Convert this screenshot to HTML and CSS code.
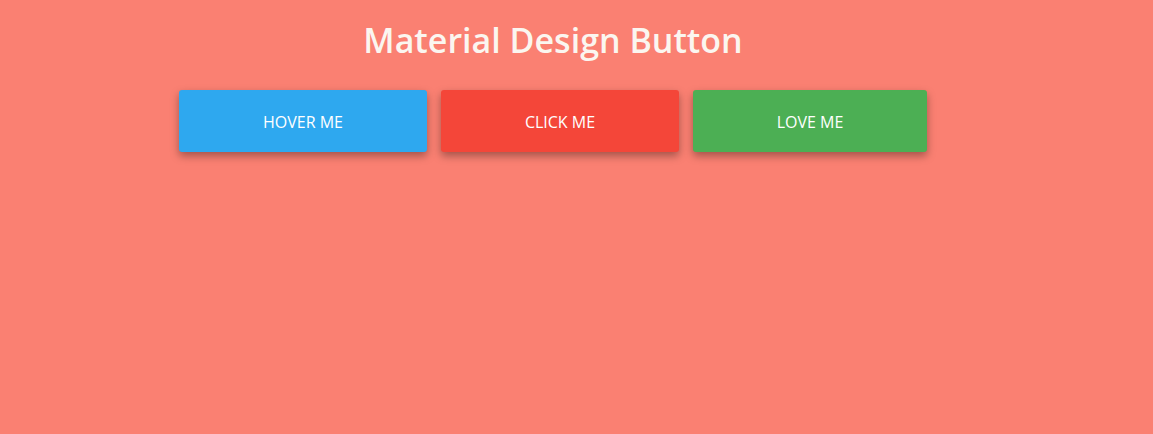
FILE: index.html
```html
<!DOCTYPE html>
<html>
<head>
<meta charset="utf-8">
<link rel="stylesheet" href="styles.css">
</head>
<body>
<div class="wrap">
  <h1 class="title">Material Design Button</h1>
  <div class="buttons">
    <button class="btn btn-blue">HOVER ME</button>
    <button class="btn btn-red">CLICK ME</button>
    <button class="btn btn-green">LOVE ME</button>
  </div>
</div>
</body>
</html>
```
FILE: styles.css
```css
html, body {
  margin: 0;
  padding: 0;
  background: #fa8072;
  height: 100%;
}
.wrap {
  width: 1106px;
  font-family: "Open Sans", sans-serif;
}
.title {
  margin: 0;
  padding-top: 15px;
  text-align: center;
  color: #fbf6f0;
  font-size: 34px;
  font-weight: 600;
  line-height: 50px;
}
.buttons {
  display: flex;
  justify-content: center;
  gap: 14px;
  margin-top: 25px;
}
.btn {
  height: 62px;
  border: none;
  border-radius: 3px;
  color: #fff;
  font-family: "Open Sans", sans-serif;
  font-size: 16px;
  font-weight: 400;
  padding: 2px 0 0;
  box-shadow: 0 4px 9px rgba(0, 0, 0, 0.35);
}
.btn-blue { width: 248px; background: #2ea8ef; }
.btn-red { width: 238px; background: #f44639; }
.btn-green { width: 234px; background: #4caf54; }
```
